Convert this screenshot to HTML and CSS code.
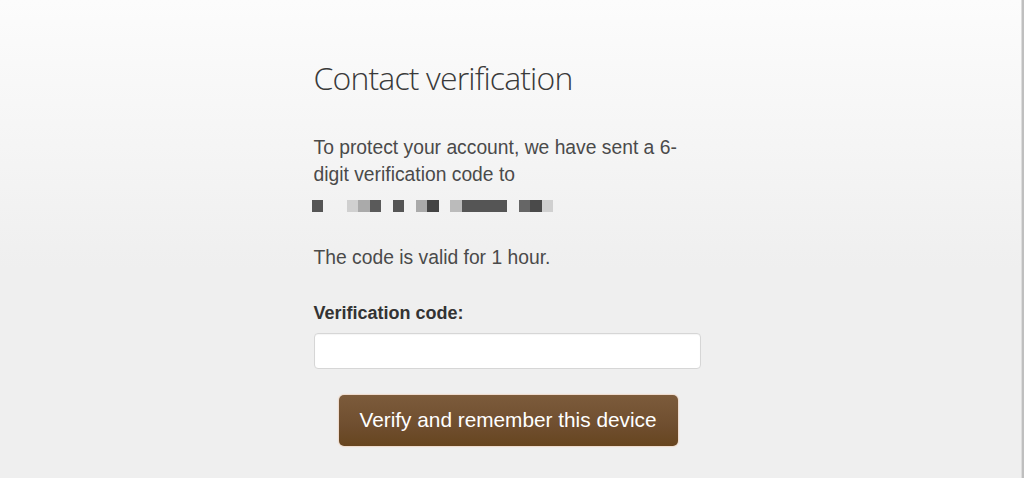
FILE: index.html
```html
<!DOCTYPE html>
<html lang="en">
<head>
<meta charset="utf-8">
<title>Contact verification</title>
<link rel="stylesheet" href="styles.css">
</head>
<body>
<div class="page">
  <main class="main">
    <div class="column">
      <h1 class="title">Contact verification</h1>
      <p class="text">To protect your account, we have sent a 6-digit verification code to
        <span class="email" aria-label="hidden e-mail address">
          <span class="px c55 first"></span>
          <span class="px cd0 g2"></span><span class="px caa"></span><span class="px c5a"></span>
          <span class="px c55 g1"></span>
          <span class="px caa g1"></span><span class="px c44"></span>
          <span class="px cbb g1"></span><span class="px c55 wide"></span>
          <span class="px c66 g1"></span><span class="px c4a"></span><span class="px cd0"></span>
        </span>
      </p>
      <p class="text valid">The code is valid for 1 hour.</p>
      <label class="label" for="code">Verification code:</label>
      <input class="input" id="code" type="text">
      <div class="actions">
        <button class="button" type="button">Verify and remember this device</button>
      </div>
    </div>
  </main>
  <div class="edge"></div>
</div>
</body>
</html>
```

FILE: styles.css
```css
html, body {
  margin: 0;
  padding: 0;
  height: 100%;
}

body {
  font-family: "Liberation Sans", Arial, sans-serif;
  color: #444;
  background: #efefef;
}

.page {
  display: flex;
  min-height: 100%;
}

.main {
  flex: 1;
  background: linear-gradient(to bottom, #fcfcfc 0px, #efefef 268px, #efefef 100%);
  padding-right: 7px;
  padding-top: 58px;
}

.edge {
  width: 2px;
  background: #bfbfbf;
  border-left: 1px solid #dcdcdc;
}

.column {
  width: 387px;
  margin: 0 auto;
  display: flex;
  flex-direction: column;
}

.title {
  margin: 0;
  font-family: "Open Sans", "Noto Sans", sans-serif;
  font-weight: 300;
  font-size: 32px;
  line-height: 40px;
  letter-spacing: -0.85px;
  color: #3a3a3a;
}

.text {
  margin: 37px 0 0;
  font-size: 19.3px;
  line-height: 26.5px;
  color: #4a4a4a;
}

.valid {
  margin-top: 30.5px;
}

.email {
  display: flex;
  height: 26.5px;
  box-sizing: border-box;
  padding-top: 12px;
}

.px {
  width: 11.5px;
  height: 12px;
}

.first { margin-left: -2px; }
.g1 { margin-left: 11.5px; }
.g2 { margin-left: 23.5px; }
.wide { width: 45.5px; }

.c44 { background: #444; }
.c4a { background: #4a4a4a; }
.c55 { background: #555; }
.c5a { background: #5a5a5a; }
.c66 { background: #666; }
.caa { background: #aaa; }
.cbb { background: #bbb; }
.cd0 { background: #d0d0d0; }

.label {
  margin-top: 30px;
  font-size: 18px;
  line-height: 22px;
  font-weight: bold;
  color: #333;
}

.input {
  margin: 9px 0 0;
  box-sizing: border-box;
  width: 387px;
  height: 36px;
  border: 1px solid #d6d6d6;
  border-radius: 4px;
  background: #fff;
  box-shadow: inset 0 1px 1px rgba(0, 0, 0, 0.04);
  font-size: 18px;
  padding: 0 10px;
}

.actions {
  display: flex;
  justify-content: center;
  padding-left: 2px;
  margin-top: 26px;
}

.button {
  width: 339px;
  height: 51px;
  border: none;
  border-radius: 5px;
  background: linear-gradient(to bottom, #7c5b3b 0%, #6f4e2f 60%, #67451f 100%);
  box-shadow: 0 0 1px 1px rgba(240, 205, 180, 0.6);
  color: #fff;
  font-family: "Liberation Sans", Arial, sans-serif;
  font-size: 20.8px;
  padding: 0;
  cursor: pointer;
}
```
